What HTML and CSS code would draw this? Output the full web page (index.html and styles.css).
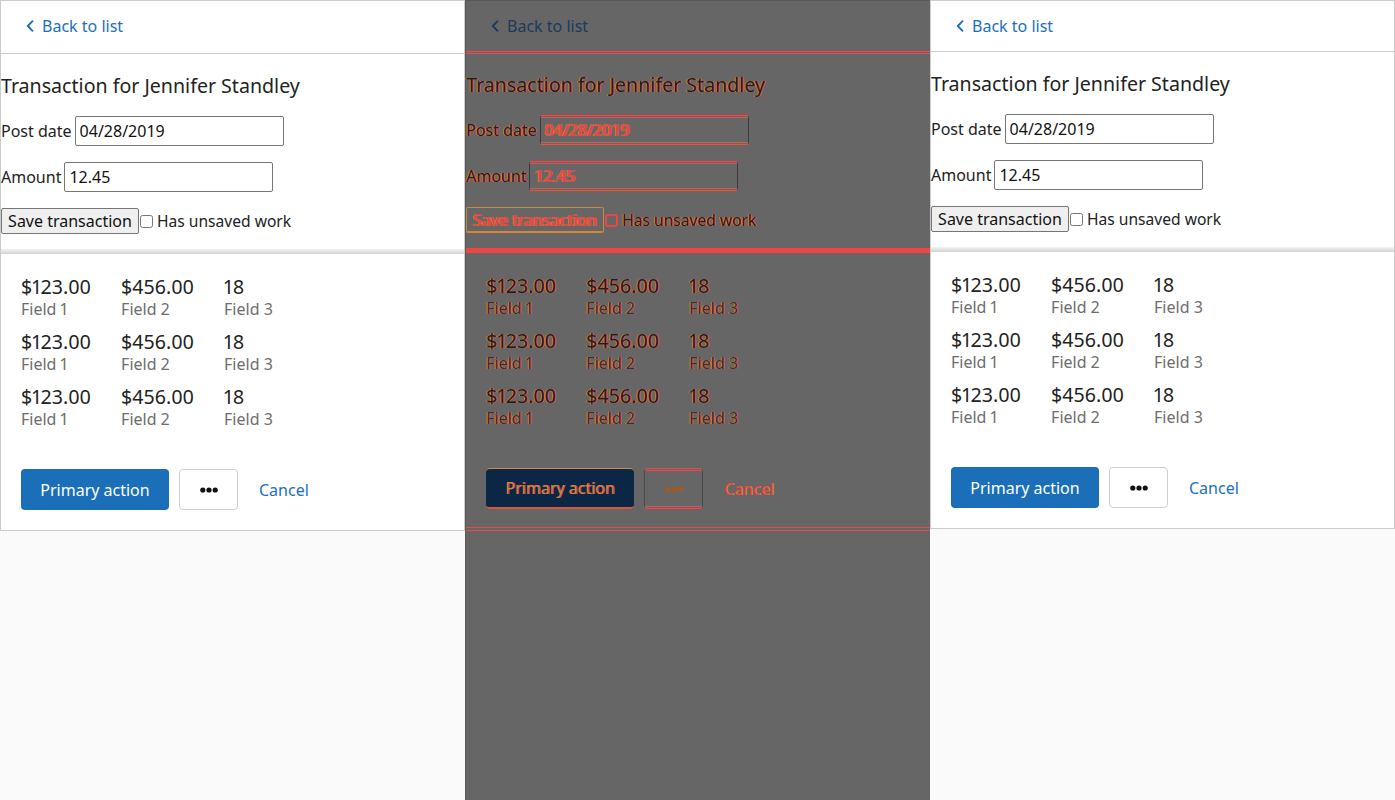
FILE: index.html
```html
<!DOCTYPE html>
<html lang="en">
<head>
<meta charset="utf-8">
<title>Transaction</title>
<link rel="stylesheet" href="styles.css">
</head>
<body>
<div class="stage">

  <section class="panel panel--a">
    <header class="top">
      <a class="back" href="#"><svg class="chev" width="8" height="12" viewBox="0 0 8 12"><path d="M6.5 1.2 L1.8 6 L6.5 10.8"/></svg>Back to list</a>
    </header>
    <div class="form">
      <h1 class="title">Transaction for Jennifer Standley</h1>
      <div class="field"><label class="ink">Post date</label><input class="input ink" type="text" value="04/28/2019"></div>
      <div class="field"><label class="ink">Amount</label><input class="input ink" type="text" value="12.45"></div>
      <div class="field field--btns"><button class="btn-save ink" type="button">Save transaction</button><input class="check" type="checkbox"><label class="ink">Has unsaved work</label></div>
    </div>
    <div class="sep"></div>
    <div class="stats">
      <div class="stat-row">
        <div class="stat"><div class="val">$123.00</div><div class="lbl">Field 1</div></div>
        <div class="stat"><div class="val">$456.00</div><div class="lbl">Field 2</div></div>
        <div class="stat"><div class="val">18</div><div class="lbl">Field 3</div></div>
      </div>
      <div class="stat-row">
        <div class="stat"><div class="val">$123.00</div><div class="lbl">Field 1</div></div>
        <div class="stat"><div class="val">$456.00</div><div class="lbl">Field 2</div></div>
        <div class="stat"><div class="val">18</div><div class="lbl">Field 3</div></div>
      </div>
      <div class="stat-row">
        <div class="stat"><div class="val">$123.00</div><div class="lbl">Field 1</div></div>
        <div class="stat"><div class="val">$456.00</div><div class="lbl">Field 2</div></div>
        <div class="stat"><div class="val">18</div><div class="lbl">Field 3</div></div>
      </div>
      <div class="actions">
        <button class="btn-primary" type="button">Primary action</button>
        <button class="btn-more" type="button"><svg width="18" height="6" viewBox="0 0 18 6"><circle cx="2.8" cy="3" r="2.6"/><circle cx="9" cy="3" r="2.6"/><circle cx="15.2" cy="3" r="2.6"/></svg></button>
        <a class="cancel" href="#">Cancel</a>
      </div>
    </div>
  </section>

  <section class="panel panel--diff">
    <header class="top">
      <a class="back" href="#"><svg class="chev" width="8" height="12" viewBox="0 0 8 12"><path d="M6.5 1.2 L1.8 6 L6.5 10.8"/></svg>Back to list</a>
    </header>
    <div class="form">
      <h1 class="title">Transaction for Jennifer Standley</h1>
      <div class="field"><label class="ink">Post date</label><input class="input ink" type="text" value="04/28/2019"></div>
      <div class="field"><label class="ink">Amount</label><input class="input ink" type="text" value="12.45"></div>
      <div class="field field--btns"><button class="btn-save ink" type="button">Save transaction</button><input class="check" type="checkbox"><label class="ink">Has unsaved work</label></div>
    </div>
    <div class="sep"></div>
    <div class="stats">
      <div class="stat-row">
        <div class="stat"><div class="val">$123.00</div><div class="lbl">Field 1</div></div>
        <div class="stat"><div class="val">$456.00</div><div class="lbl">Field 2</div></div>
        <div class="stat"><div class="val">18</div><div class="lbl">Field 3</div></div>
      </div>
      <div class="stat-row">
        <div class="stat"><div class="val">$123.00</div><div class="lbl">Field 1</div></div>
        <div class="stat"><div class="val">$456.00</div><div class="lbl">Field 2</div></div>
        <div class="stat"><div class="val">18</div><div class="lbl">Field 3</div></div>
      </div>
      <div class="stat-row">
        <div class="stat"><div class="val">$123.00</div><div class="lbl">Field 1</div></div>
        <div class="stat"><div class="val">$456.00</div><div class="lbl">Field 2</div></div>
        <div class="stat"><div class="val">18</div><div class="lbl">Field 3</div></div>
      </div>
      <div class="actions">
        <button class="btn-primary" type="button">Primary action</button>
        <button class="btn-more" type="button"><svg width="18" height="6" viewBox="0 0 18 6"><circle cx="2.8" cy="3" r="2.6"/><circle cx="9" cy="3" r="2.6"/><circle cx="15.2" cy="3" r="2.6"/></svg></button>
        <a class="cancel" href="#">Cancel</a>
      </div>
    </div>
  </section>

  <section class="panel panel--b">
    <header class="top">
      <a class="back" href="#"><svg class="chev" width="8" height="12" viewBox="0 0 8 12"><path d="M6.5 1.2 L1.8 6 L6.5 10.8"/></svg>Back to list</a>
    </header>
    <div class="form">
      <h1 class="title">Transaction for Jennifer Standley</h1>
      <div class="field"><label class="ink">Post date</label><input class="input ink" type="text" value="04/28/2019"></div>
      <div class="field"><label class="ink">Amount</label><input class="input ink" type="text" value="12.45"></div>
      <div class="field field--btns"><button class="btn-save ink" type="button">Save transaction</button><input class="check" type="checkbox"><label class="ink">Has unsaved work</label></div>
    </div>
    <div class="sep"></div>
    <div class="stats">
      <div class="stat-row">
        <div class="stat"><div class="val">$123.00</div><div class="lbl">Field 1</div></div>
        <div class="stat"><div class="val">$456.00</div><div class="lbl">Field 2</div></div>
        <div class="stat"><div class="val">18</div><div class="lbl">Field 3</div></div>
      </div>
      <div class="stat-row">
        <div class="stat"><div class="val">$123.00</div><div class="lbl">Field 1</div></div>
        <div class="stat"><div class="val">$456.00</div><div class="lbl">Field 2</div></div>
        <div class="stat"><div class="val">18</div><div class="lbl">Field 3</div></div>
      </div>
      <div class="stat-row">
        <div class="stat"><div class="val">$123.00</div><div class="lbl">Field 1</div></div>
        <div class="stat"><div class="val">$456.00</div><div class="lbl">Field 2</div></div>
        <div class="stat"><div class="val">18</div><div class="lbl">Field 3</div></div>
      </div>
      <div class="actions">
        <button class="btn-primary" type="button">Primary action</button>
        <button class="btn-more" type="button"><svg width="18" height="6" viewBox="0 0 18 6"><circle cx="2.8" cy="3" r="2.6"/><circle cx="9" cy="3" r="2.6"/><circle cx="15.2" cy="3" r="2.6"/></svg></button>
        <a class="cancel" href="#">Cancel</a>
      </div>
    </div>
  </section>

</div>
</body>
</html>
```

FILE: styles.css
```css
* { box-sizing: border-box; }
html, body { margin: 0; padding: 0; }
body {
  background: #fafafa;
  font-family: "Noto Sans", "DejaVu Sans", sans-serif;
  font-size: 16px;
  color: #222;
}

.stage {
  display: flex;
  align-items: flex-start;
  width: 1395px;
}

.panel {
  flex: none;
  width: 465px;
  background: #fff;
  border: 1px solid #cccccc;
}

/* header */
.top {
  padding: 15px 24px 17px 25px;
  border-bottom: 1px solid #cccccc;
}
.back {
  display: flex;
  align-items: center;
  gap: 8px;
  height: 20px;
  line-height: 20px;
  color: #1c6fbd;
  text-decoration: none;
}
.chev { fill: none; stroke: currentColor; stroke-width: 1.9; stroke-linecap: round; stroke-linejoin: round; }

/* form */
.title {
  margin: 18px 0 17px;
  font-size: 19.6px;
  font-weight: 400;
  line-height: 27px;
  color: #222;
}
.field {
  display: flex;
  align-items: center;
  gap: 3px;
  height: 30px;
  margin-bottom: 16px;
  white-space: nowrap;
}
.field--btns { height: 26px; gap: 0; margin-bottom: 15px; }
.field--btns label { font-size: 15.6px; }
.input {
  width: 209px;
  height: 30px;
  padding: 0 4px;
  border: 1px solid #767676;
  border-radius: 2px;
  font: 16px "Noto Sans", "DejaVu Sans", sans-serif;
  color: #111;
  background: #fff;
}
.btn-save {
  width: 138px;
  height: 26px;
  padding: 0;
  border: 1px solid #767676;
  border-radius: 2px;
  background: #efefef;
  font: 16px "Noto Sans", "DejaVu Sans", sans-serif;
  color: #111;
  white-space: nowrap;
}
.check {
  width: 13px;
  height: 13px;
  margin: 0 4px 0 1px;
}

.sep {
  height: 5px;
  background: linear-gradient(#f4f4f4, #d2d2d2);
}

/* stats */
.stats { padding: 21px 20px 20px; }
.stat-row {
  display: flex;
  gap: 30px;
  margin-bottom: 11px;
}
.val {
  font-size: 19.6px;
  line-height: 24px;
  color: #222;
  font-variant-numeric: proportional-nums;
}
.lbl { font-size: 16px; line-height: 20px; color: #6d6d6d; font-variant-numeric: proportional-nums; }

.actions {
  display: flex;
  align-items: center;
  margin-top: 40px;
}
.btn-primary {
  width: 148px;
  height: 41px;
  padding: 0;
  border: 0;
  border-radius: 4px;
  background: #1a6fb8;
  color: #fff;
  font: 16px "Noto Sans", "DejaVu Sans", sans-serif;
  white-space: nowrap;
}
.btn-more {
  display: flex;
  align-items: center;
  justify-content: center;
  width: 59px;
  height: 41px;
  margin-left: 10px;
  padding: 0;
  border: 1px solid #cfcfcf;
  border-radius: 4px;
  background: #fff;
}
.btn-more svg { fill: #111; }
.cancel {
  margin-left: 21px;
  color: #1c6fbd;
  text-decoration: none;
}

/* right panel: 2px shorter header */
.panel--b .top { padding-top: 15px; padding-bottom: 15px; }

/* middle: diff overlay */
.panel--diff {
  height: 800px;
  background: #666666;
  border-color: #585858;
  border-bottom: 0;
  border-right: 0;
}
.panel--diff .top {
  padding-top: 15px;
  padding-bottom: 15px;
  border-bottom: 3px double #f04848;
}
.panel--diff .back { color: #1b3b5c; }
.panel--diff .title { margin-top: 17px; }
.panel--diff .title,
.panel--diff .ink,
.panel--diff .val,
.panel--diff .lbl {
  color: #1f1f1f;
  text-shadow: -1px 0 0 #d28a3e, 1px 0 0 #ee4242;
}
.panel--diff .lbl { color: #333; }
.panel--diff .input {
  background: transparent;
  color: #ee4242;
  border: 1px solid #3c3c3c;
  border-top: 3px double #f04848;
  border-bottom: 3px double #e4563e;
}
.panel--diff .btn-save {
  background: transparent;
  color: #ee4242;
  border: 1px solid #c98a3e;
  border-bottom: 2px solid #d8853a;
}
.panel--diff .check {
  appearance: none;
  -webkit-appearance: none;
  border: 2px solid #ee4444;
  border-radius: 3px;
  background: transparent;
}
.panel--diff .sep { height: 5px; background: #f04545; }
.panel--diff .stats {
  padding-bottom: 18px;
  border-bottom: 4px double #f04848;
}
.panel--diff .btn-primary {
  background: #0b2745;
  color: #cf8a42;
  text-shadow: 1px 0 0 #e64444;
  border-top: 1px solid #d48c3e;
  border-bottom: 2px solid #d8553c;
}
.panel--diff .btn-more {
  background: transparent;
  border: 1px solid #4a4a4a;
  border-top: 3px double #f04848;
  border-bottom: 3px double #f04848;
}
.panel--diff .btn-more svg { fill: #a8581c; }
.panel--diff .cancel {
  color: #e84444;
  text-shadow: 1px 0 0 #c98a3e;
}
```
